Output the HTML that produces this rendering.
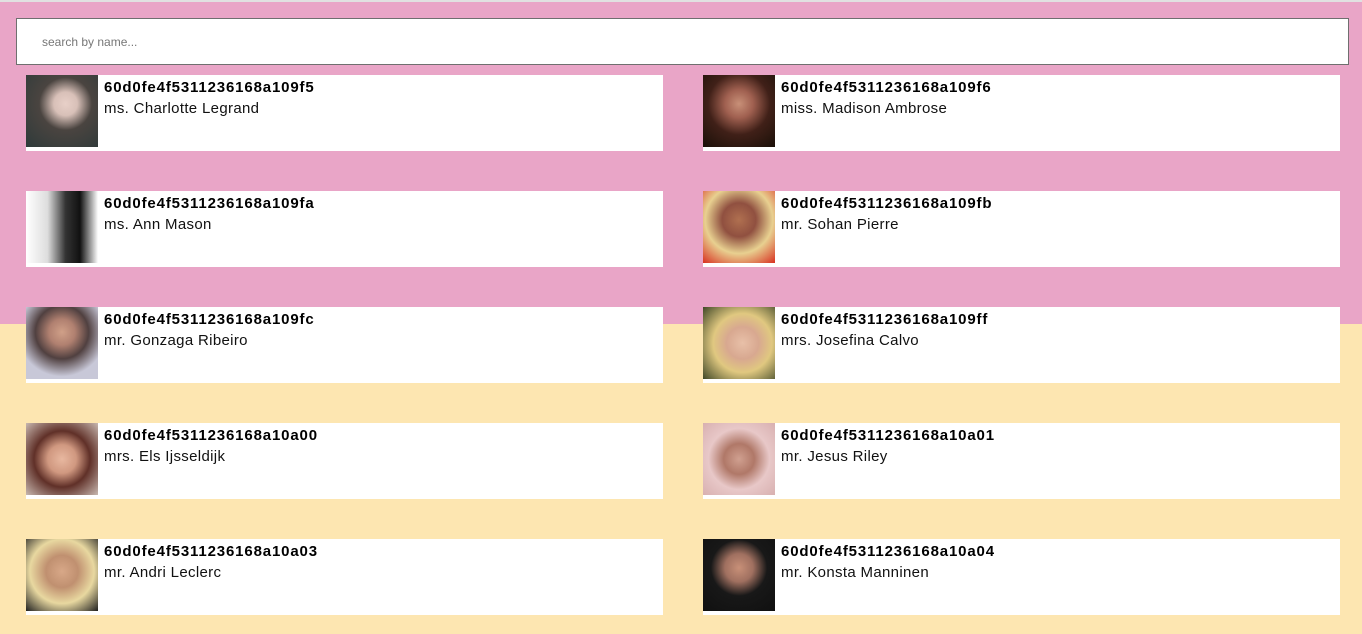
<!DOCTYPE html>
<html><head><style>
body{margin:0;width:1362px;height:634px;overflow:hidden;background:linear-gradient(#e1e1e1 0,#e1e1e1 2px,#e9a5c7 2px,#e9a5c7 324px,#fde6b1 324px);font-family:"Liberation Sans",sans-serif;position:relative}
.search{position:absolute;left:16px;top:18px;width:1331px;height:45px;border:1px solid #6f6f6f;background:#fff;box-sizing:content-box}
.search span{position:absolute;left:25px;top:16px;font-size:12px;color:#777}
.card{position:absolute;width:637px;height:76px;background:#fff}
.card .img{position:absolute;left:0;top:0;width:72px;height:72px}
.card b{position:absolute;left:78px;top:4px;font-size:15px;color:#000;letter-spacing:0.85px}
.card i{position:absolute;left:78px;top:25px;font-size:15px;font-style:normal;color:#111;letter-spacing:0.33px}
</style></head><body>
<div class="search"><span>search by name...</span></div>
<div class="card" style="left:26px;top:75px"><div class="img" style="background:radial-gradient(circle at 55% 40%,#e8d0c8 0,#d8c0b8 20%,#4a4440 45%,#2e3a3a 100%)"></div><b>60d0fe4f5311236168a109f5</b><i>ms. Charlotte Legrand</i></div>
<div class="card" style="left:703px;top:75px"><div class="img" style="background:radial-gradient(circle at 50% 40%,#c89078 0,#a06050 25%,#402018 55%,#1a1008 100%)"></div><b>60d0fe4f5311236168a109f6</b><i>miss. Madison Ambrose</i></div>
<div class="card" style="left:26px;top:191px"><div class="img" style="background:linear-gradient(90deg,#fff 0,#ddd 30%,#333 55%,#111 75%,#fff 100%)"></div><b>60d0fe4f5311236168a109fa</b><i>ms. Ann Mason</i></div>
<div class="card" style="left:703px;top:191px"><div class="img" style="background:radial-gradient(circle at 50% 40%,#b07050 0,#905040 30%,#e8d090 60%,#d83020 100%)"></div><b>60d0fe4f5311236168a109fb</b><i>mr. Sohan Pierre</i></div>
<div class="card" style="left:26px;top:307px"><div class="img" style="background:radial-gradient(circle at 50% 35%,#d0a088 0,#b08070 22%,#504040 45%,#c8c8d8 75%)"></div><b>60d0fe4f5311236168a109fc</b><i>mr. Gonzaga Ribeiro</i></div>
<div class="card" style="left:703px;top:307px"><div class="img" style="background:radial-gradient(circle at 55% 50%,#e8c0a8 0,#d8a890 30%,#e0c880 55%,#404828 100%)"></div><b>60d0fe4f5311236168a109ff</b><i>mrs. Josefina Calvo</i></div>
<div class="card" style="left:26px;top:423px"><div class="img" style="background:radial-gradient(circle at 50% 50%,#e8b8a0 0,#d09880 28%,#603028 55%,#c8b8b0 100%)"></div><b>60d0fe4f5311236168a10a00</b><i>mrs. Els Ijsseldijk</i></div>
<div class="card" style="left:703px;top:423px"><div class="img" style="background:radial-gradient(circle at 50% 50%,#d0a090 0,#b07868 30%,#e8c8c8 60%,#d8b0b0 100%)"></div><b>60d0fe4f5311236168a10a01</b><i>mr. Jesus Riley</i></div>
<div class="card" style="left:26px;top:539px"><div class="img" style="background:radial-gradient(circle at 50% 45%,#d8a888 0,#c09070 30%,#e8d8a0 60%,#202020 100%)"></div><b>60d0fe4f5311236168a10a03</b><i>mr. Andri Leclerc</i></div>
<div class="card" style="left:703px;top:539px"><div class="img" style="background:radial-gradient(circle at 50% 40%,#c89078 0,#a07060 25%,#181818 50%,#101010 100%)"></div><b>60d0fe4f5311236168a10a04</b><i>mr. Konsta Manninen</i></div>
</body></html>
